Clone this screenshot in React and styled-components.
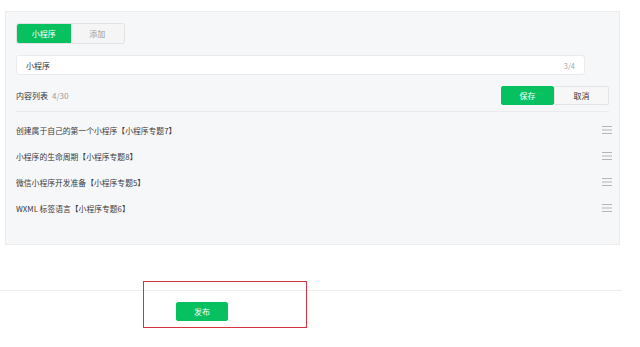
import React from "react";
import styled, { createGlobalStyle } from "styled-components";

const GlobalStyle = createGlobalStyle`
  html, body {
    margin: 0;
    padding: 0;
    background: #fff;
    font-family: "Noto Sans CJK SC", "Noto Sans", sans-serif;
    color: #333;
  }
`;

const GREEN = "#07c160";

const Page = styled.div`
  width: 640px;
  height: 347px;
  padding-top: 11px;
  box-sizing: border-box;
  overflow: hidden;
`;

const Panel = styled.section`
  margin-left: 5px;
  width: 615px;
  height: 234px;
  box-sizing: border-box;
  background: #f6f7f9;
  border: 1px solid #ececec;
  padding: 11px 11px 0 10px;
`;

const Tabs = styled.div`
  display: flex;
  width: 109px;
  height: 21px;
  border: 1px solid #e2e2e2;
  border-radius: 3px;
  overflow: hidden;
  box-sizing: border-box;
`;

const Tab = styled.div`
  flex: 1;
  display: flex;
  align-items: center;
  justify-content: center;
  font-size: 8px;
  background: ${(p) => (p.$active ? GREEN : "#f5f5f5")};
  color: ${(p) => (p.$active ? "#fff" : "#9a9a9a")};
`;

const InputBox = styled.div`
  margin-top: 11px;
  width: 569px;
  height: 20px;
  box-sizing: border-box;
  background: #fff;
  border: 1px solid #ebebeb;
  border-radius: 3px;
  display: flex;
  align-items: center;
  justify-content: space-between;
  padding: 0 9px 0 9px;
  font-size: 8px;
`;

const Counter = styled.span`
  color: #aaa;
  font-size: 7.5px;
`;

const HeaderRow = styled.div`
  margin-top: 11px;
  width: 593px;
  display: flex;
  align-items: center;
  justify-content: space-between;
  padding-bottom: 6px;
  border-bottom: 1px solid #ebebeb;
`;

const Title = styled.div`
  font-size: 8px;
  color: #333;
  span {
    color: #999;
    margin-left: 4px;
  }
`;

const ButtonGroup = styled.div`
  display: flex;
`;

const Btn = styled.button`
  width: ${(p) => p.$w || 54}px;
  height: 19px;
  padding: 0;
  border: 1px solid ${(p) => (p.$primary ? GREEN : "#e4e4e4")};
  border-radius: 2px;
  background: ${(p) => (p.$primary ? GREEN : "#f7f7f7")};
  color: ${(p) => (p.$primary ? "#fff" : "#333")};
  font-family: inherit;
  font-size: 8px;
  display: flex;
  align-items: center;
  justify-content: center;
`;

const List = styled.ul`
  list-style: none;
  margin: 5px 0 0;
  padding: 0;
  width: 596px;
`;

const Item = styled.li`
  height: 26px;
  display: flex;
  align-items: center;
  justify-content: space-between;
  font-size: 7.8px;
  color: #3a3a3a;
`;

const Footer = styled.div`
  position: relative;
  margin-top: 45px;
  width: 622px;
  border-top: 1px solid #eeeeee;
  padding: 11px 0 0 176px;
  box-sizing: border-box;
`;

const Highlight = styled.div`
  position: absolute;
  left: 143px;
  top: -10px;
  width: 164px;
  height: 47px;
  box-sizing: border-box;
  border: 1.5px solid #d6323f;
  pointer-events: none;
`;

const Handle = () => (
  <svg width="10" height="8" viewBox="0 0 10 8">
    <g stroke="#b5b5b5" strokeWidth="1">
      <line x1="0" y1="0.5" x2="10" y2="0.5" />
      <line x1="0" y1="4" x2="10" y2="4" />
      <line x1="0" y1="7.5" x2="10" y2="7.5" />
    </g>
  </svg>
);

const items = [
  "创建属于自己的第一个小程序【小程序专题7】",
  "小程序的生命周期【小程序专题8】",
  "微信小程序开发准备【小程序专题5】",
  "WXML 标签语言【小程序专题6】",
];

export default function App() {
  return (
    <Page>
      <GlobalStyle />
      <Panel>
        <Tabs>
          <Tab $active>小程序</Tab>
          <Tab>添加</Tab>
        </Tabs>
        <InputBox>
          <span>小程序</span>
          <Counter>3/4</Counter>
        </InputBox>
        <HeaderRow>
          <Title>
            内容列表<span>4/30</span>
          </Title>
          <ButtonGroup>
            <Btn $primary $w={53}>保存</Btn>
            <Btn $w={55}>取消</Btn>
          </ButtonGroup>
        </HeaderRow>
        <List>
          {items.map((t, i) => (
            <Item key={i}>
              <span>{t}</span>
              <Handle />
            </Item>
          ))}
        </List>
      </Panel>
      <Footer>
        <Highlight />
        <Btn $primary $w={52}>发布</Btn>
      </Footer>
    </Page>
  );
}
